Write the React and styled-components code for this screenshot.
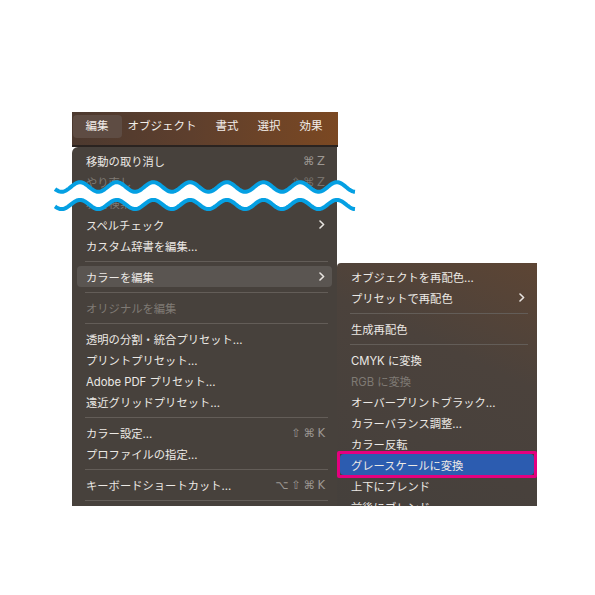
import React from "react";
import styled, { createGlobalStyle } from "styled-components";

const GlobalStyle = createGlobalStyle`
  body {
    margin: 0;
    background: #ffffff;
  }
`;

const Stage = styled.div`
  position: relative;
  width: 595px;
  height: 595px;
  box-sizing: border-box;
  padding: 112px 0 0 72px;
  display: flex;
  align-items: flex-start;
  font-family: Inter, "Noto Sans CJK JP", sans-serif;
  overflow: hidden;
`;

const LeftColumn = styled.div`
  width: 265px;
  display: flex;
  flex-direction: column;
`;

const MenuBar = styled.div`
  width: 266px;
  height: 35px;
  box-sizing: border-box;
  padding: 3px 0 0 4px;
  display: flex;
  align-items: flex-start;
  background: linear-gradient(90deg, #4c392f 0%, #5e3f2d 45%, #7b4822 100%);
  border-bottom: 2px solid #2a2320;
`;

const MenuTitle = styled.div`
  height: 23px;
  line-height: 23px;
  padding: 0 ${(p) => (p.$active ? 13 : 9.5)}px;
  margin: 0 ${(p) => (p.$active ? -3.5 : 0)}px;
  border-radius: 4px;
  font-size: 11.5px;
  color: #f2ede9;
  background: ${(p) => (p.$active ? "#5e4c43" : "transparent")};
  white-space: nowrap;
`;

const MainPanel = styled.div`
  width: 265px;
  box-sizing: border-box;
  padding: 3px 5px 1px;
  background: #47413c;
  border-top-left-radius: 6px;
`;

const SubPanel = styled.div`
  margin-top: 151px;
  width: 200px;
  height: 243px;
  box-sizing: border-box;
  padding: 3px 5px 0;
  overflow: hidden;
  background: linear-gradient(205deg, #5d4534 0%, #4b423c 38%, #45403c 100%);
  border-top-left-radius: 4px;
`;

const Row = styled.div`
  position: relative;
  height: 21px;
  display: flex;
  align-items: center;
  padding: 0 7px 0 ${(p) => (p.$selected ? 11 : 9)}px;
  margin: ${(p) => (p.$gap ? 1 : 0)}px ${(p) => (p.$selected ? -2 : 0)}px 0;
  border-radius: 4px;
  font-size: 11.3px;
  color: ${(p) => (p.$dim ? "#7f7a74" : "#ece9e5")};
  background: ${(p) =>
    p.$selected ? "#2c5cb0" : p.$active ? "#5a5551" : "transparent"};

  ${(p) =>
    p.$selected &&
    `
    &::after {
      content: "";
      position: absolute;
      inset: -3px;
      border: 3px solid #e4007f;
      border-radius: 2px;
    }
  `}
`;

const Label = styled.span`
  flex: 1;
  white-space: nowrap;
`;

const Shortcut = styled.span`
  font-family: "DejaVu Sans", Inter, sans-serif;
  font-size: 11.5px;
  letter-spacing: 2.5px;
  margin-right: -2.5px;
  color: ${(p) => (p.$dim ? "#76716c" : "#9c9792")};
`;

const Separator = styled.div`
  height: 10px;
  display: flex;
  align-items: center;
  padding: 0 4px 0 8px;

  &::before {
    content: "";
    flex: 1;
    height: 1px;
    background: #635d58;
  }
`;

const WaveLayer = styled.svg`
  position: absolute;
  left: 50px;
  top: 175px;
  overflow: visible;
`;

const Chevron = () => (
  <svg width="6" height="9" viewBox="0 0 6 9">
    <path
      d="M1 1 L4.6 4.5 L1 8"
      fill="none"
      stroke="#e8e4e0"
      strokeWidth="1.6"
      strokeLinecap="round"
      strokeLinejoin="round"
    />
  </svg>
);

const mainItems = [
  { label: "移動の取り消し", shortcut: "⌘Z" },
  { label: "やり直し", shortcut: "⇧⌘Z", dim: true },
  { label: "次を検索", dim: true },
  { label: "スペルチェック", arrow: true, gap: true },
  { label: "カスタム辞書を編集…" },
  { sep: true },
  { label: "カラーを編集", arrow: true, active: true },
  { sep: true },
  { label: "オリジナルを編集", dim: true },
  { sep: true },
  { label: "透明の分割・統合プリセット…" },
  { label: "プリントプリセット…" },
  { label: "Adobe PDF プリセット…" },
  { label: "遠近グリッドプリセット…" },
  { sep: true },
  { label: "カラー設定…", shortcut: "⇧⌘K" },
  { label: "プロファイルの指定…" },
  { sep: true },
  { label: "キーボードショートカット…", shortcut: "⌥⇧⌘K" },
  { sep: true },
];

const subItems = [
  { label: "オブジェクトを再配色…" },
  { label: "プリセットで再配色", arrow: true },
  { sep: true },
  { label: "生成再配色" },
  { sep: true },
  { label: "CMYK に変換" },
  { label: "RGB に変換", dim: true },
  { label: "オーバープリントブラック…" },
  { label: "カラーバランス調整…" },
  { label: "カラー反転" },
  { label: "グレースケールに変換", selected: true },
  { label: "上下にブレンド" },
  { label: "前後にブレンド" },
];

const menuTitles = ["編集", "オブジェクト", "書式", "選択", "効果"];

function MenuItems({ items }) {
  return items.map((item, i) =>
    item.sep ? (
      <Separator key={i} />
    ) : (
      <Row
        key={i}
        $dim={item.dim}
        $active={item.active}
        $selected={item.selected}
        $gap={item.gap}
      >
        <Label>{item.label}</Label>
        {item.shortcut && <Shortcut $dim={item.dim}>{item.shortcut}</Shortcut>}
        {item.arrow && <Chevron />}
      </Row>
    )
  );
}

function wavePath(cy, amp, x0, x1, peakX, period) {
  const pts = [];
  for (let x = x0; x <= x1; x += 1) {
    const y = cy - amp * Math.cos((2 * Math.PI * (x - peakX)) / period);
    pts.push([x, y]);
  }
  return pts;
}

function Wave() {
  const upper = wavePath(12, 4.8, 5, 305, 30, 36.7);
  const lower = wavePath(29.5, 4.6, 5, 305, 30, 36.7);
  const toD = (pts) =>
    pts.map((p, i) => `${i ? "L" : "M"}${p[0]} ${p[1].toFixed(2)}`).join(" ");
  const fill =
    toD(upper) +
    " " +
    lower
      .slice()
      .reverse()
      .map((p) => `L${p[0]} ${p[1].toFixed(2)}`)
      .join(" ") +
    " Z";
  return (
    <WaveLayer width="310" height="42" viewBox="0 0 310 42">
      <path d={fill} fill="#ffffff" />
      <path d={toD(upper)} fill="none" stroke="#05a0e3" strokeWidth="4" />
      <path d={toD(lower)} fill="none" stroke="#05a0e3" strokeWidth="4" />
    </WaveLayer>
  );
}

export default function App() {
  return (
    <Stage>
      <GlobalStyle />
      <LeftColumn>
        <MenuBar>
          {menuTitles.map((t, i) => (
            <MenuTitle key={t} $active={i === 0}>
              {t}
            </MenuTitle>
          ))}
        </MenuBar>
        <MainPanel>
          <MenuItems items={mainItems} />
        </MainPanel>
      </LeftColumn>
      <SubPanel>
        <MenuItems items={subItems} />
      </SubPanel>
      <Wave />
    </Stage>
  );
}
